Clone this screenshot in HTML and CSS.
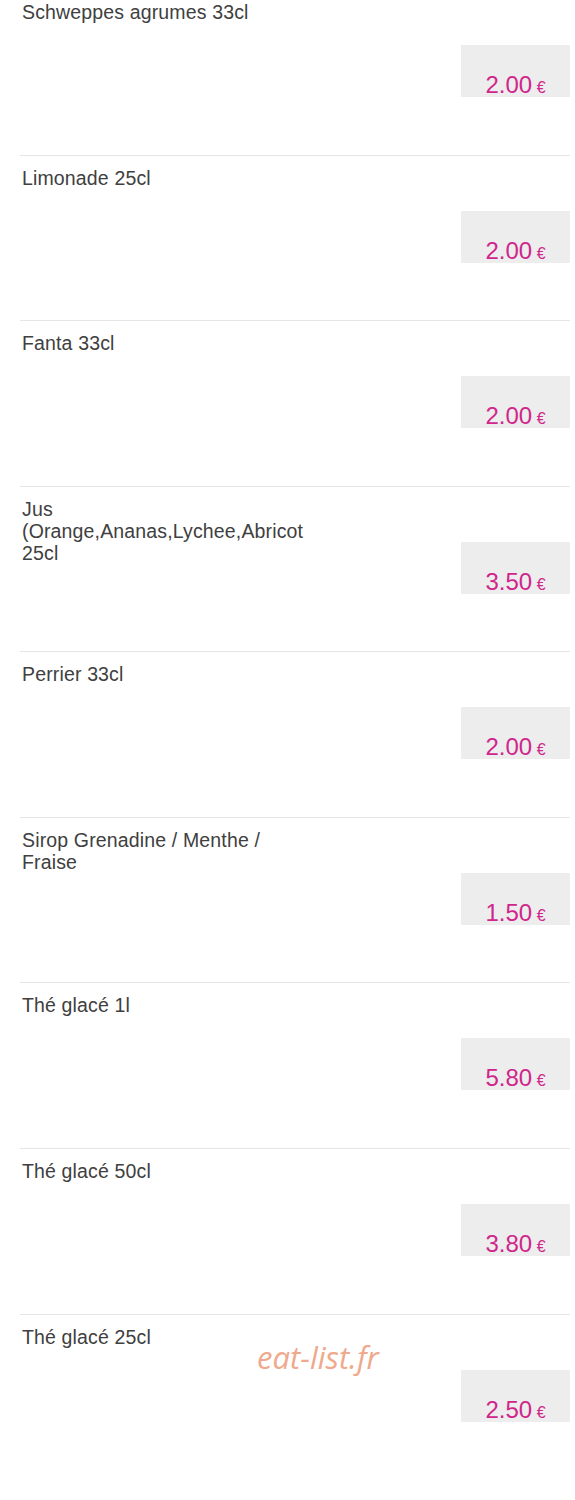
FILE: index.html
```html
<!DOCTYPE html>
<html lang="fr">
<head>
<meta charset="utf-8">
<title>Boissons</title>
<link rel="stylesheet" href="styles.css">
</head>
<body>
<div class="page">
  <ul class="menu">
    <li class="item"><div class="name">Schweppes agrumes 33cl</div><div class="price"><span class="amount">2.00</span> <span class="cur">€</span></div></li>
    <li class="item"><div class="name">Limonade 25cl</div><div class="price"><span class="amount">2.00</span> <span class="cur">€</span></div></li>
    <li class="item"><div class="name">Fanta 33cl</div><div class="price"><span class="amount">2.00</span> <span class="cur">€</span></div></li>
    <li class="item"><div class="name">Jus<br>(Orange,Ananas,Lychee,Abricot<br>25cl</div><div class="price"><span class="amount">3.50</span> <span class="cur">€</span></div></li>
    <li class="item"><div class="name">Perrier 33cl</div><div class="price"><span class="amount">2.00</span> <span class="cur">€</span></div></li>
    <li class="item"><div class="name">Sirop Grenadine / Menthe / Fraise</div><div class="price"><span class="amount">1.50</span> <span class="cur">€</span></div></li>
    <li class="item"><div class="name">Thé glacé 1l</div><div class="price"><span class="amount">5.80</span> <span class="cur">€</span></div></li>
    <li class="item"><div class="name">Thé glacé 50cl</div><div class="price"><span class="amount">3.80</span> <span class="cur">€</span></div></li>
    <li class="item"><div class="name">Thé glacé 25cl</div><div class="price"><span class="amount">2.50</span> <span class="cur">€</span></div></li>
  </ul>
  <div class="watermark">eat-list.fr</div>
</div>
</body>
</html>
```
FILE: styles.css
```css
html, body {
  margin: 0;
  padding: 0;
  background: #ffffff;
}

.page {
  position: relative;
  height: 1500px;
  overflow: hidden;
  font-family: "Liberation Sans", Arial, sans-serif;
}

.menu {
  list-style: none;
  margin: -11px 5px 0 20px;
  padding: 0;
}

.item {
  box-sizing: border-box;
  height: 165.57px;
  border-top: 1px solid #e6e6e6;
  padding: 11px 0 0 2px;
  display: flex;
  align-items: flex-start;
}

.name {
  width: 285px;
  font-size: 19.5px;
  letter-spacing: 0.15px;
  line-height: 22px;
  color: #404040;
}

.price {
  margin-left: auto;
  margin-top: 44px;
  width: 109px;
  height: 52px;
  box-sizing: border-box;
  padding-top: 26px;
  background: #ededed;
  overflow: hidden;
  text-align: center;
  color: #d0268c;
  line-height: 28px;
  white-space: nowrap;
}

.amount {
  font-size: 24px;
}

.cur {
  font-size: 16px;
}

.watermark {
  position: absolute;
  left: 257px;
  top: 1336px;
  font-family: "Open Sans", sans-serif;
  font-style: italic;
  font-size: 31px;
  color: #efa98c;
}
```
